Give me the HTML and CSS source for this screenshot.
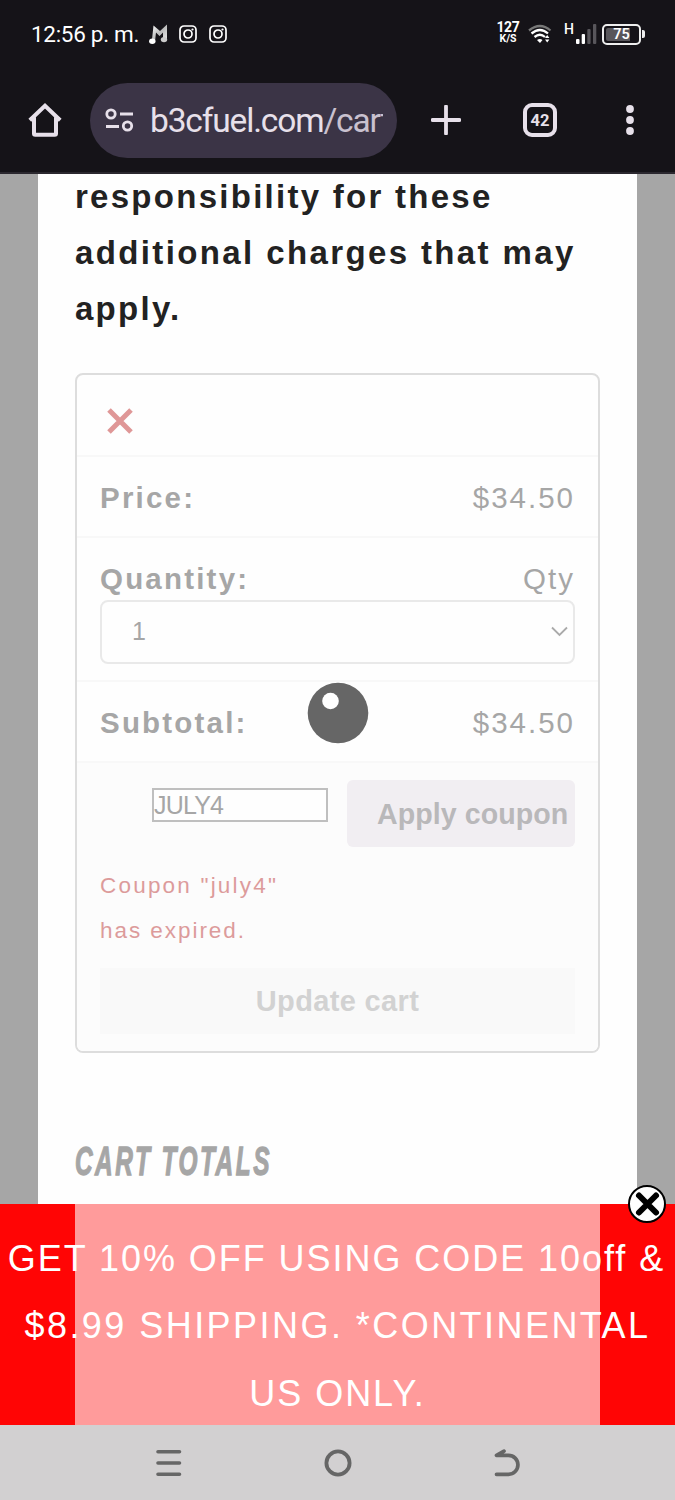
FILE: index.html
```html
<!DOCTYPE html>
<html lang="en">
<head>
<meta charset="utf-8">
<title>Cart</title>
<link rel="stylesheet" href="styles.css">
</head>
<body>
<div class="phone">
  <header class="top">
    <div class="status">
      <span class="clock">12:56 p. m.</span>
      <svg class="note" width="20" height="21" viewBox="0 0 20 21"><defs><linearGradient id="sheen" x1="0" y1="0" x2="1" y2="1"><stop offset="0" stop-color="#fff"/><stop offset=".5" stop-color="#bbb"/><stop offset="1" stop-color="#eee"/></linearGradient></defs><path d="M4.500 1.500 11 7 18 .5V16h-4V8.500L10.500 12 7 8.500 6 17.500H2.800z" fill="url(#sheen)"/><ellipse cx="3.300" cy="17.300" rx="3.200" ry="2.700" fill="#fff"/><ellipse cx="15" cy="15.600" rx="3.200" ry="2.700" fill="#ccc"/></svg>
      <svg class="insta" width="18" height="18" viewBox="0 0 18 18"><g fill="none" stroke="#fff" stroke-width="1.700"><rect x="1" y="1" width="16" height="16" rx="4"/><circle cx="9" cy="9" r="4"/></g><circle cx="13.500" cy="4.500" r="1.100" fill="#fff"/></svg>
      <svg class="insta" width="18" height="18" viewBox="0 0 18 18"><g fill="none" stroke="#fff" stroke-width="1.700"><rect x="1" y="1" width="16" height="16" rx="4"/><circle cx="9" cy="9" r="4"/></g><circle cx="13.500" cy="4.500" r="1.100" fill="#fff"/></svg>
      <div class="rate"><b>127</b><small>K/S</small></div>
      <svg class="wifi" width="24" height="20" viewBox="0 0 24 20"><g fill="none" stroke-width="2.300"><path d="M1 6.500Q12-2.500 22.500 6.500" stroke="#777"/><path d="M3.500 9.500Q12 2.500 20 9.500M6.500 13Q12 8.500 17 13" stroke="#fff"/></g><path d="M9 16Q12 14 14.500 16L12 19zM17 14l2.200-3 2.200 3zM17 15.500h4.400l-2.200 3z" fill="#fff"/></svg>
      <span class="net">H</span>
      <svg class="signal" width="21" height="20" viewBox="0 0 21 20"><g fill="#fff"><rect x="0" y="15" width="3.500" height="5" rx="1"/><rect x="5.700" y="10" width="3.300" height="10" rx="1"/></g><g fill="#58565b"><rect x="11.300" y="5" width="3.300" height="15" rx="1"/><rect x="17" y="0" width="3.300" height="20" rx="1"/></g></svg>
      <div class="battery"><span>75</span></div><i class="cap"></i>
    </div>
    <div class="toolbar">
      <svg class="home" width="34" height="34" viewBox="0 0 34 34"><path d="M1.800 17.200 17 2.800l15.200 14.400M6 14.500V30.500q0 1.300 1.300 1.300H26.700q1.300 0 1.300-1.300V14.500" fill="none" stroke="#e7e0ea" stroke-width="4"/></svg>
      <div class="url">
        <svg width="29" height="26" viewBox="0 0 29 26"><g fill="none" stroke="#e7e0ea" stroke-width="2.800"><circle cx="6" cy="7" r="4.200"/><path d="M15 7h13M1 19.500h13"/><circle cx="22.500" cy="19" r="4.200"/></g></svg>
        <span class="address">b3cfuel.com<em>/cart</em></span>
      </div>
      <svg class="plus" width="30" height="30" viewBox="0 0 30 30"><path d="M15 1.500v27M1.500 15h27" stroke="#e7e0ea" stroke-width="3.800" stroke-linecap="round"/></svg>
      <div class="tabs">42</div>
      <svg class="more" width="8" height="30" viewBox="0 0 8 30"><g fill="#e7e0ea"><circle cx="4" cy="4" r="3.900"/><circle cx="4" cy="15" r="3.900"/><circle cx="4" cy="26" r="3.900"/></g></svg>
    </div>
  </header>

  <main class="page">
    <div class="sheet">
      <p class="lead">responsibility for these<br><span class="wide">additional charges that may</span><br>apply.</p>
      <section class="card">
        <div class="row remove"><svg width="26" height="26" viewBox="0 0 26 26"><path d="M2 2l22 22M24 2L2 24" stroke="#df9797" stroke-width="5"/></svg></div>
        <div class="row"><b>Price:</b><span>$34.50</span></div>
        <div class="row quantity">
          <div class="pair"><b>Quantity:</b><span>Qty</span></div>
          <div class="select"><span>1</span><svg width="17" height="11" viewBox="0 0 17 11"><path d="M1 1.500l7.500 7.500L16 1.500" fill="none" stroke="#aaa" stroke-width="1.800"/></svg></div>
        </div>
        <div class="row subtotal"><b>Subtotal:</b><span>$34.50</span></div>
        <div class="actions">
          <div class="coupon"><div class="code">JULY4</div><div class="apply">Apply coupon</div></div>
          <p class="error">Coupon "july4"<br><span>has expired.</span></p>
          <div class="update">Update cart</div>
        </div>
        <svg class="spinner" width="62" height="62" viewBox="0 0 62 62"><circle cx="31" cy="31" r="30.300" fill="#666"/><circle cx="23.500" cy="19" r="8.300" fill="#fff"/></svg>
      </section>
      <h2 class="totals">CART TOTALS</h2>
    </div>
  </main>

  <aside class="banner">
    <p><span class="l1">GET 10% OFF USING CODE 10off &amp;</span><span class="l2">$8.99 SHIPPING. *CONTINENTAL</span><span class="l3">US ONLY.</span></p>
    <svg class="close" width="38" height="38" viewBox="0 0 38 38"><circle cx="19" cy="19" r="18" fill="#fff" stroke="#000" stroke-width="2"/><path d="M11 10.500l17 17M28 10.500l-17 17" stroke="#000" stroke-width="6" stroke-linecap="round"/></svg>
  </aside>

  <nav class="nav">
    <svg width="28" height="28" viewBox="0 0 28 28"><path d="M3 2.700h21.500M3 14h21.500M3 25.300h21.500" stroke="#666" stroke-width="3.600" stroke-linecap="round"/></svg>
    <svg width="28" height="28" viewBox="0 0 28 28"><circle cx="14" cy="14" r="11.600" fill="none" stroke="#666" stroke-width="3.800"/></svg>
    <svg width="28" height="28" viewBox="0 0 28 28"><path d="M11 2.200L3.500 6.400H15.500a9.400 9.400 0 0 1 0 18.900H3.500" fill="none" stroke="#666" stroke-width="3.700" stroke-linecap="round" stroke-linejoin="round"/></svg>
  </nav>
</div>
</body>
</html>
```
FILE: styles.css
```css
* { box-sizing: border-box; }
body { margin: 0; font-family: "Liberation Sans", Arial, sans-serif; }
p, h2 { margin: 0; }
svg { display: block; flex: none; }
.phone { width: 675px; height: 1500px; display: flex; flex-direction: column; overflow: hidden; }

.top { height: 174px; flex: none; background: #151318; border-bottom: 2px solid #2b282f; color: #fff; font-family: Roboto, sans-serif; }
.status { height: 68px; display: flex; align-items: center; padding-left: 30px; white-space: nowrap; }
.clock { width: 119px; font-size: 22.500px; letter-spacing: -.3px; padding-left: 1px; }
.note { margin-right: 10px; }
.insta { margin-right: 12px; }
.rate { width: 24px; margin-left: 257px; display: flex; flex-direction: column; align-items: center; margin-top: -3px; }
.rate b { font-size: 14px; line-height: 13px; font-weight: 700; letter-spacing: -.3px; }
.rate small { font-size: 10.500px; line-height: 10px; font-weight: 700; }
.wifi { margin-left: 8px; }
.net { margin: -10px 2px 0 12px; font-size: 14px; font-weight: 500; width: 10px; }
.signal { margin-right: 5px; }
.battery { width: 39px; height: 21px; border: 2px solid #eee; border-radius: 5px; padding: 2px; display: flex; }
.battery span { width: 100%; display: flex; align-items: center; justify-content: center; font-size: 14.500px; font-weight: 600; border-radius: 2px; background: linear-gradient(90deg, #58565b 77%, transparent 77%); }
.cap { width: 3px; height: 8px; background: #eee; border-radius: 0 2px 2px 0; margin-left: 1px; }

.toolbar { height: 104px; display: flex; align-items: center; padding-left: 28px; color: #e7e0ea; }
.url { width: 307px; height: 75px; margin-left: 28px; padding-left: 15px; border-radius: 38px; background: #3b3446; display: flex; align-items: center; }
.address { width: 233px; margin-left: 16px; overflow: hidden; white-space: nowrap; font-size: 33.500px; letter-spacing: -1.150px; }
.address em { font-style: normal; color: #c9c1cf; }
.plus { margin-left: 34px; }
.tabs { width: 34px; height: 34px; margin-left: 62px; border: 4px solid #e7e0ea; border-radius: 9px; font-size: 16.500px; font-weight: 700; display: flex; align-items: center; justify-content: center; }
.more { margin-left: 69px; }

.page { height: 1030px; flex: none; background: #a6a6a6; padding: 0 38px 0 37.500px; overflow: hidden; display: flex; }
.sheet { flex: 1; background: #fefefe; padding: 0 37px 0 37.500px; }
.lead { margin-top: -5px; font-size: 33px; line-height: 56px; font-weight: 700; letter-spacing: 2.270px; color: #222; white-space: nowrap; }
.wide { letter-spacing: 2.380px; }
.card { position: relative; margin-top: 36px; height: 680px; border: 2px solid #ddd; border-radius: 8px; font-size: 29.500px; letter-spacing: 2.200px; color: #a6a6a6; overflow: hidden; }
.row { height: 81px; padding: 2px 23px 0 23px; border-bottom: 2px solid #f8f8f8; display: flex; align-items: center; justify-content: space-between; }
.row span { letter-spacing: 2px; }
.row.remove { height: 82px; padding: 11px 0 0 30px; }
.row.quantity { height: 144px; display: block; padding-top: 0; }
.pair { height: 62px; padding-top: 20px; display: flex; align-items: center; justify-content: space-between; }
.select { height: 64px; border: 2px solid #e9e9e9; border-radius: 8px; padding: 0 5px 1px 30px; display: flex; align-items: center; justify-content: space-between; font-size: 25px; }
.actions { height: 290px; background: #fcfcfc; padding: 17px 23px 0 23px; letter-spacing: 0; }
.coupon { height: 67px; display: flex; }
.code { width: 176px; height: 34px; margin: 8px 19px 0 52px; border: 2px solid #bfbfbf; background: #fefefe; font-size: 25px; line-height: 30px; letter-spacing: -.8px; }
.apply { flex: 1; padding-left: 30px; background: #f1eef2; border-radius: 6px; color: #b9b8ba; font-size: 28.600px; line-height: 68px; font-weight: 700; white-space: nowrap; letter-spacing: .05px; }
.error { margin-top: 16px; font-size: 22.500px; line-height: 45px; letter-spacing: 2.200px; color: #dc9b9b; }
.error span { letter-spacing: 1.950px; }
.update { margin-top: 15px; height: 66px; background: #f9f9f9; color: #d2d2d2; font-size: 29px; line-height: 67px; font-weight: 700; letter-spacing: .35px; text-align: center; }
.spinner { position: absolute; left: 229.500px; top: 306.500px; }
.totals { margin-top: 84px; font-size: 41px; line-height: 48px; font-style: italic; letter-spacing: 4.200px; color: #a6a6a6; white-space: nowrap; transform: scaleX(.595); transform-origin: left; -webkit-text-stroke: 1.300px #a6a6a6; }

.banner { position: relative; height: 221px; flex: none; background: linear-gradient(90deg, #ff0505 75px, #ff9b9b 75px, #ff9b9b 600px, #ff0505 600px); color: #fff; }
.banner p { padding-top: 20.500px; font-size: 36px; line-height: 67.500px; letter-spacing: 1.950px; white-space: nowrap; }
.banner span { display: block; text-align: center; }
.banner .l1 { margin: 0 1px 0 -1px; }
.banner .l2 { letter-spacing: 2.450px; }
.close { position: absolute; left: 628px; top: -19px; }
.nav { height: 75px; flex: none; background: #d2d0d1; display: flex; align-items: center; justify-content: space-between; padding: 0 154px 0 155px; }
```
